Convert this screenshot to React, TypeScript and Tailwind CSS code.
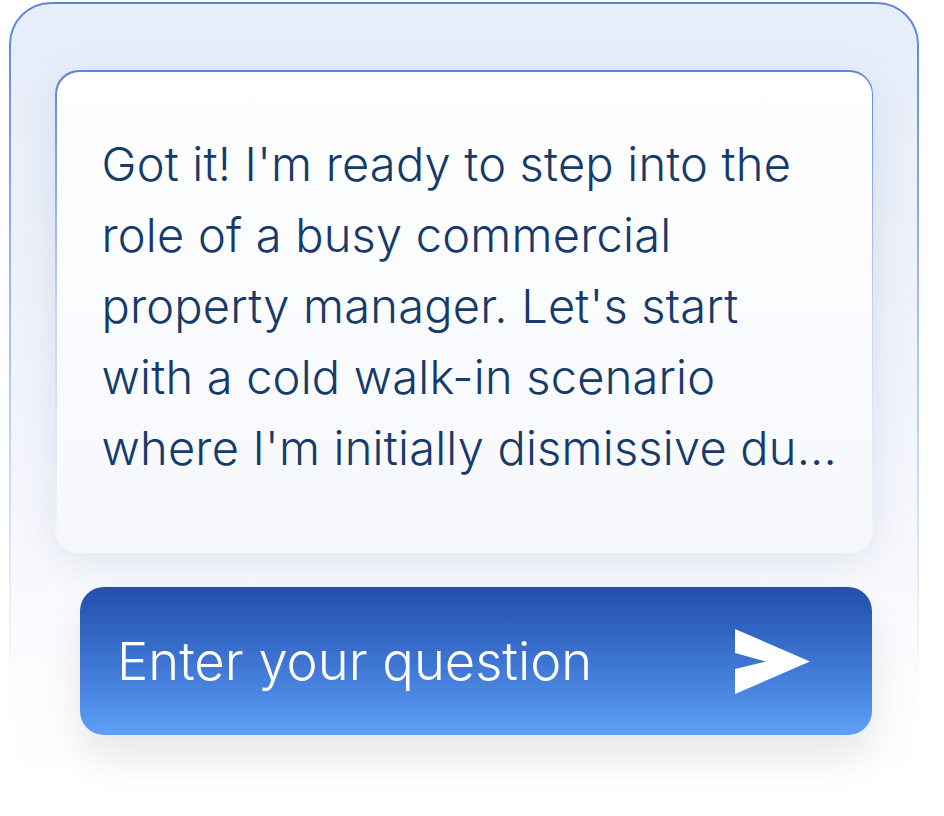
import React from "react";

const lines = [
  "Got it! I'm ready to step into the",
  "role of a busy commercial",
  "property manager. Let's start",
  "with a cold walk-in scenario",
  "where I'm initially dismissive du...",
];

const SendArrow = () => (
  <svg width="75" height="65" viewBox="0 0 75 65" aria-hidden="true">
    <polygon points="0,0 75,32.5 0,65 0,40 31,32.5 0,24" fill="#ffffff" />
  </svg>
);

export default function App() {
  return (
    <div
      className="min-h-[816px] w-[944px] bg-white pt-[2px] pl-[9px]"
      style={{ fontFamily: "Inter, 'Noto Sans', sans-serif" }}
    >
      {/* outer frame: border fades out toward the bottom */}
      <div className="w-[910px] rounded-[42px] bg-gradient-to-b from-[#5a86d6] via-[#c2d2f0] via-55% to-transparent to-90% p-[2px]">
        <div className="flex h-[778px] flex-col rounded-[40px] bg-gradient-to-b from-[#e7edf9] via-[#f1f4fb] to-white pt-[66px] pl-[44px]">
          <div className="w-[818px] rounded-[24px] bg-gradient-to-b from-[#5a86d6] via-[#c7d5f0] to-[#f6f8fc] p-[1.5px] shadow-[0_10px_40px_rgba(60,80,130,0.12)]">
            <div className="h-[480px] rounded-[22.5px] bg-gradient-to-b from-white to-[#f6f8fc] pt-[56px] pl-[45px]">
              <p className="text-[47px] leading-[71px] font-light tracking-[0.2px] text-[#163a6a]">
                {lines.map((line) => (
                  <span key={line} className="block whitespace-nowrap">
                    {line}
                  </span>
                ))}
              </p>
            </div>
          </div>

          <div className="mt-[34px] ml-[25px] flex h-[148px] w-[792px] items-center justify-between rounded-[24px] bg-gradient-to-b from-[#2250ab] via-[#3d74d2] to-[#5ea0f6] pl-[37px] pr-[62px] shadow-[0_24px_40px_rgba(0,0,0,0.09)]">
            <span className="text-[52.5px] leading-none font-light text-white">Enter your question</span>
            <SendArrow />
          </div>
        </div>
      </div>
    </div>
  );
}
